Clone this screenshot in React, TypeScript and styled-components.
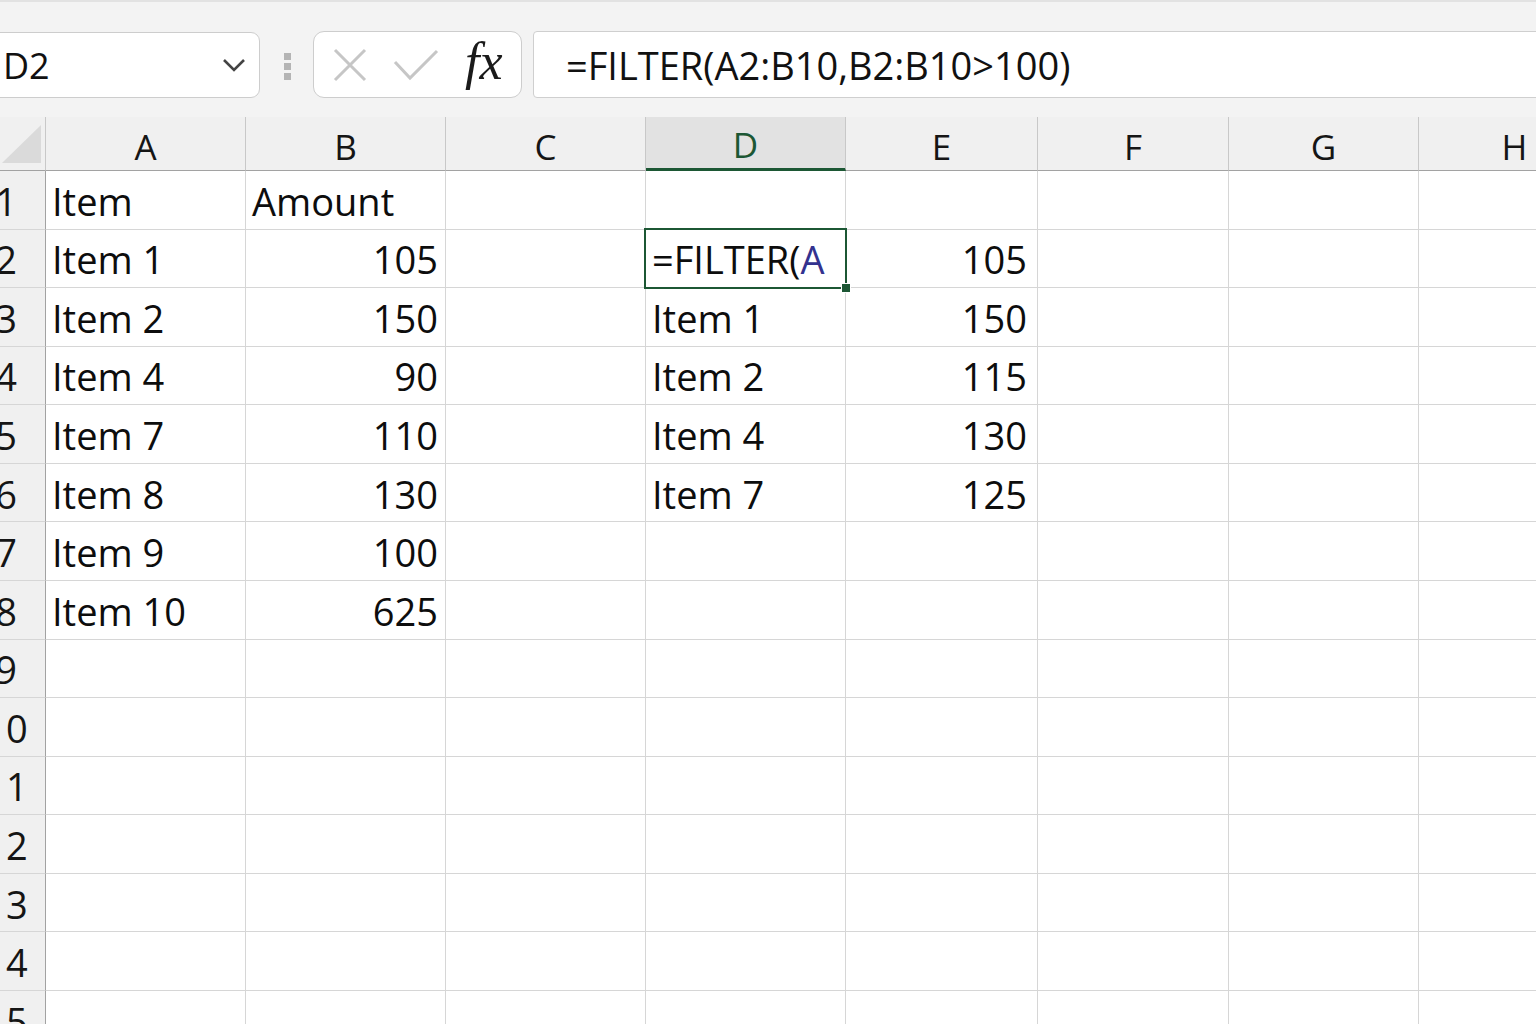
import React from 'react';
import styled, { createGlobalStyle } from 'styled-components';

const GREEN = '#1c5734';
const GRID = '#d6d6d6';
const HEADER_EDGE = '#a2a2a2';

const Global = createGlobalStyle`
  html, body { margin: 0; padding: 0; background: #f3f3f3; }
  body { font-family: "Open Sans", "Noto Sans", sans-serif; }
`;

const Page = styled.div`
  width: 1536px;
  height: 1024px;
  overflow: hidden;
  display: flex;
  flex-direction: column;
  background: #f3f3f3;
`;

const Toolbar = styled.div`
  height: 117px;
  flex-shrink: 0;
  box-sizing: border-box;
  border-top: 2px solid #e2e2e2;
  padding-top: 29px;
  display: flex;
  align-items: flex-start;
`;

const NameBox = styled.div`
  margin-left: -12px;
  margin-top: 1px;
  width: 272px;
  height: 66px;
  box-sizing: border-box;
  flex-shrink: 0;
  background: #fff;
  border: 1px solid #cdcdcd;
  border-radius: 9px;
  display: flex;
  align-items: center;
  justify-content: space-between;
  padding: 0 13px 0 14px;
  font-size: 36px;
  color: #111;
`;

const Grip = styled.div`
  margin: 22px 22px 0 24px;
  display: flex;
  flex-direction: column;
  gap: 3px;
`;

const GripDot = styled.span`
  width: 7px;
  height: 7px;
  background: #b4b4b4;
`;

const ButtonBox = styled.div`
  width: 209px;
  height: 67px;
  flex-shrink: 0;
  box-sizing: border-box;
  background: #fff;
  border: 1px solid #cdcdcd;
  border-radius: 11px;
  display: flex;
  align-items: center;
  padding-left: 19px;
  gap: 26px;
`;

const Fx = styled.span`
  font-family: "Liberation Serif", "DejaVu Serif", serif;
  font-style: italic;
  font-size: 52px;
  color: #1a1a1a;
  line-height: 1;
  padding-bottom: 6px;
`;

const FormulaBox = styled.div`
  margin-left: 11px;
  margin-right: -10px;
  flex: 1;
  height: 67px;
  box-sizing: border-box;
  background: #fff;
  border: 1px solid #cfcfcf;
  border-radius: 4px;
  display: flex;
  align-items: center;
  padding-left: 32px;
  font-size: 38px;
  color: #111;
  white-space: nowrap;
`;

const Sheet = styled.div`
  display: grid;
  width: max-content;
  grid-template-columns: 46px 200px 200px 200px 200px 192px 191px 190px 192px;
  grid-template-rows: 54px;
  grid-auto-rows: 58.57px;
  background: #fff;
`;

const Corner = styled.div`
  background: #f0f0f0;
  box-sizing: border-box;
  border-right: 1px solid #c8c8c8;
  border-bottom: 1px solid ${HEADER_EDGE};
  display: flex;
  align-items: flex-end;
  justify-content: flex-end;
  padding: 0 4px 7px 0;
`;

const CornerTriangle = styled.div`
  width: 39px;
  height: 38px;
  background: #dadada;
  clip-path: polygon(100% 0, 100% 100%, 0 100%);
`;

const ColHeader = styled.div<{ $active?: boolean }>`
  box-sizing: border-box;
  background: ${(p) => (p.$active ? '#e2e2e2' : '#f0f0f0')};
  border-right: 1px solid #c8c8c8;
  border-bottom: ${(p) => (p.$active ? `3px solid ${GREEN}` : `1px solid ${HEADER_EDGE}`)};
  display: flex;
  align-items: center;
  justify-content: center;
  padding-top: ${(p) => (p.$active ? '4px' : '6px')};
  font-size: 35px;
  color: ${(p) => (p.$active ? GREEN : '#151515')};
`;

const RowHeader = styled.div`
  box-sizing: border-box;
  background: #f0f0f0;
  border-right: 1px solid ${HEADER_EDGE};
  border-bottom: 1px solid ${GRID};
  overflow: hidden;
  display: flex;
  align-items: center;
  padding-top: 2px;
  font-size: 38px;
  color: #151515;
`;

const RowLabel = styled.span`
  flex-shrink: 0;
  width: 78px;
  margin-left: -33px;
  text-align: center;
`;

const Cell = styled.div<{ $align?: 'left' | 'right'; $padRight?: number; $selected?: boolean }>`
  position: relative;
  box-sizing: border-box;
  border-right: 1px solid ${GRID};
  border-bottom: 1px solid ${GRID};
  display: flex;
  align-items: center;
  justify-content: ${(p) => (p.$align === 'right' ? 'flex-end' : 'flex-start')};
  padding: 2px ${(p) => p.$padRight ?? 6}px 0 6px;
  font-size: 38px;
  color: #0d0d0d;
  white-space: nowrap;
  z-index: ${(p) => (p.$selected ? 2 : 'auto')};
  ${(p) =>
    p.$selected
      ? `&::after {
          content: '';
          position: absolute;
          top: -2px; left: -2px; right: -2px; bottom: -2px;
          border: 2.5px solid ${GREEN};
          pointer-events: none;
        }`
      : ''}
`;

const FillHandle = styled.span`
  position: absolute;
  right: -6px;
  bottom: -6px;
  width: 8px;
  height: 8px;
  background: ${GREEN};
  border: 1px solid #fff;
  z-index: 3;
`;

const RefText = styled.span`
  color: #33328f;
`;

const columns = ['A', 'B', 'C', 'D', 'E', 'F', 'G', 'H'];

type CellVal = string | undefined;
const colA: CellVal[] = ['Item', 'Item 1', 'Item 2', 'Item 4', 'Item 7', 'Item 8', 'Item 9', 'Item 10'];
const colB: CellVal[] = ['Amount', '105', '150', '90', '110', '130', '100', '625'];
const colD: CellVal[] = ['', '', 'Item 1', 'Item 2', 'Item 4', 'Item 7'];
const colE: CellVal[] = ['', '105', '150', '115', '130', '125'];

const isNum = (v?: string) => !!v && /^\d+$/.test(v);

const XIcon = () => (
  <svg width="34" height="34" viewBox="0 0 34 34">
    <path d="M2 2 L32 32 M32 2 L2 32" stroke="#c6c6c6" strokeWidth="3" fill="none" />
  </svg>
);

const CheckIcon = () => (
  <svg width="46" height="32" viewBox="0 0 46 32">
    <path d="M2 13 L17 29 L44 2" stroke="#c6c6c6" strokeWidth="3" fill="none" />
  </svg>
);

const Chevron = () => (
  <svg width="24" height="15" viewBox="0 0 24 15">
    <path d="M2 2 L12 12 L22 2" stroke="#444" strokeWidth="2.6" fill="none" />
  </svg>
);

export default function App() {
  const rows = Array.from({ length: 15 }, (_, i) => i + 1);
  return (
    <Page>
      <Global />
      <Toolbar>
        <NameBox>
          <span>D2</span>
          <Chevron />
        </NameBox>
        <Grip>
          <GripDot />
          <GripDot />
          <GripDot />
        </Grip>
        <ButtonBox>
          <XIcon />
          <CheckIcon />
          <Fx>fx</Fx>
        </ButtonBox>
        <FormulaBox>=FILTER(A2:B10,B2:B10&gt;100)</FormulaBox>
      </Toolbar>
      <Sheet>
        <Corner>
          <CornerTriangle />
        </Corner>
        {columns.map((c) => (
          <ColHeader key={c} $active={c === 'D'}>
            {c}
          </ColHeader>
        ))}
        {rows.map((r) => {
          const i = r - 1;
          const a = colA[i];
          const b = colB[i];
          const d = colD[i];
          const e = colE[i];
          const selected = r === 2;
          return (
            <React.Fragment key={r}>
              <RowHeader>
                <RowLabel>{r}</RowLabel>
              </RowHeader>
              <Cell $align={isNum(a) ? 'right' : 'left'}>{a}</Cell>
              <Cell $align={isNum(b) ? 'right' : 'left'} $padRight={7}>
                {b}
              </Cell>
              <Cell />
              <Cell $selected={selected}>
                {selected ? (
                  <>
                    =FILTER(<RefText>A</RefText>
                    <FillHandle />
                  </>
                ) : (
                  d
                )}
              </Cell>
              <Cell $align="right" $padRight={10}>
                {e}
              </Cell>
              <Cell />
              <Cell />
              <Cell />
            </React.Fragment>
          );
        })}
      </Sheet>
    </Page>
  );
}
